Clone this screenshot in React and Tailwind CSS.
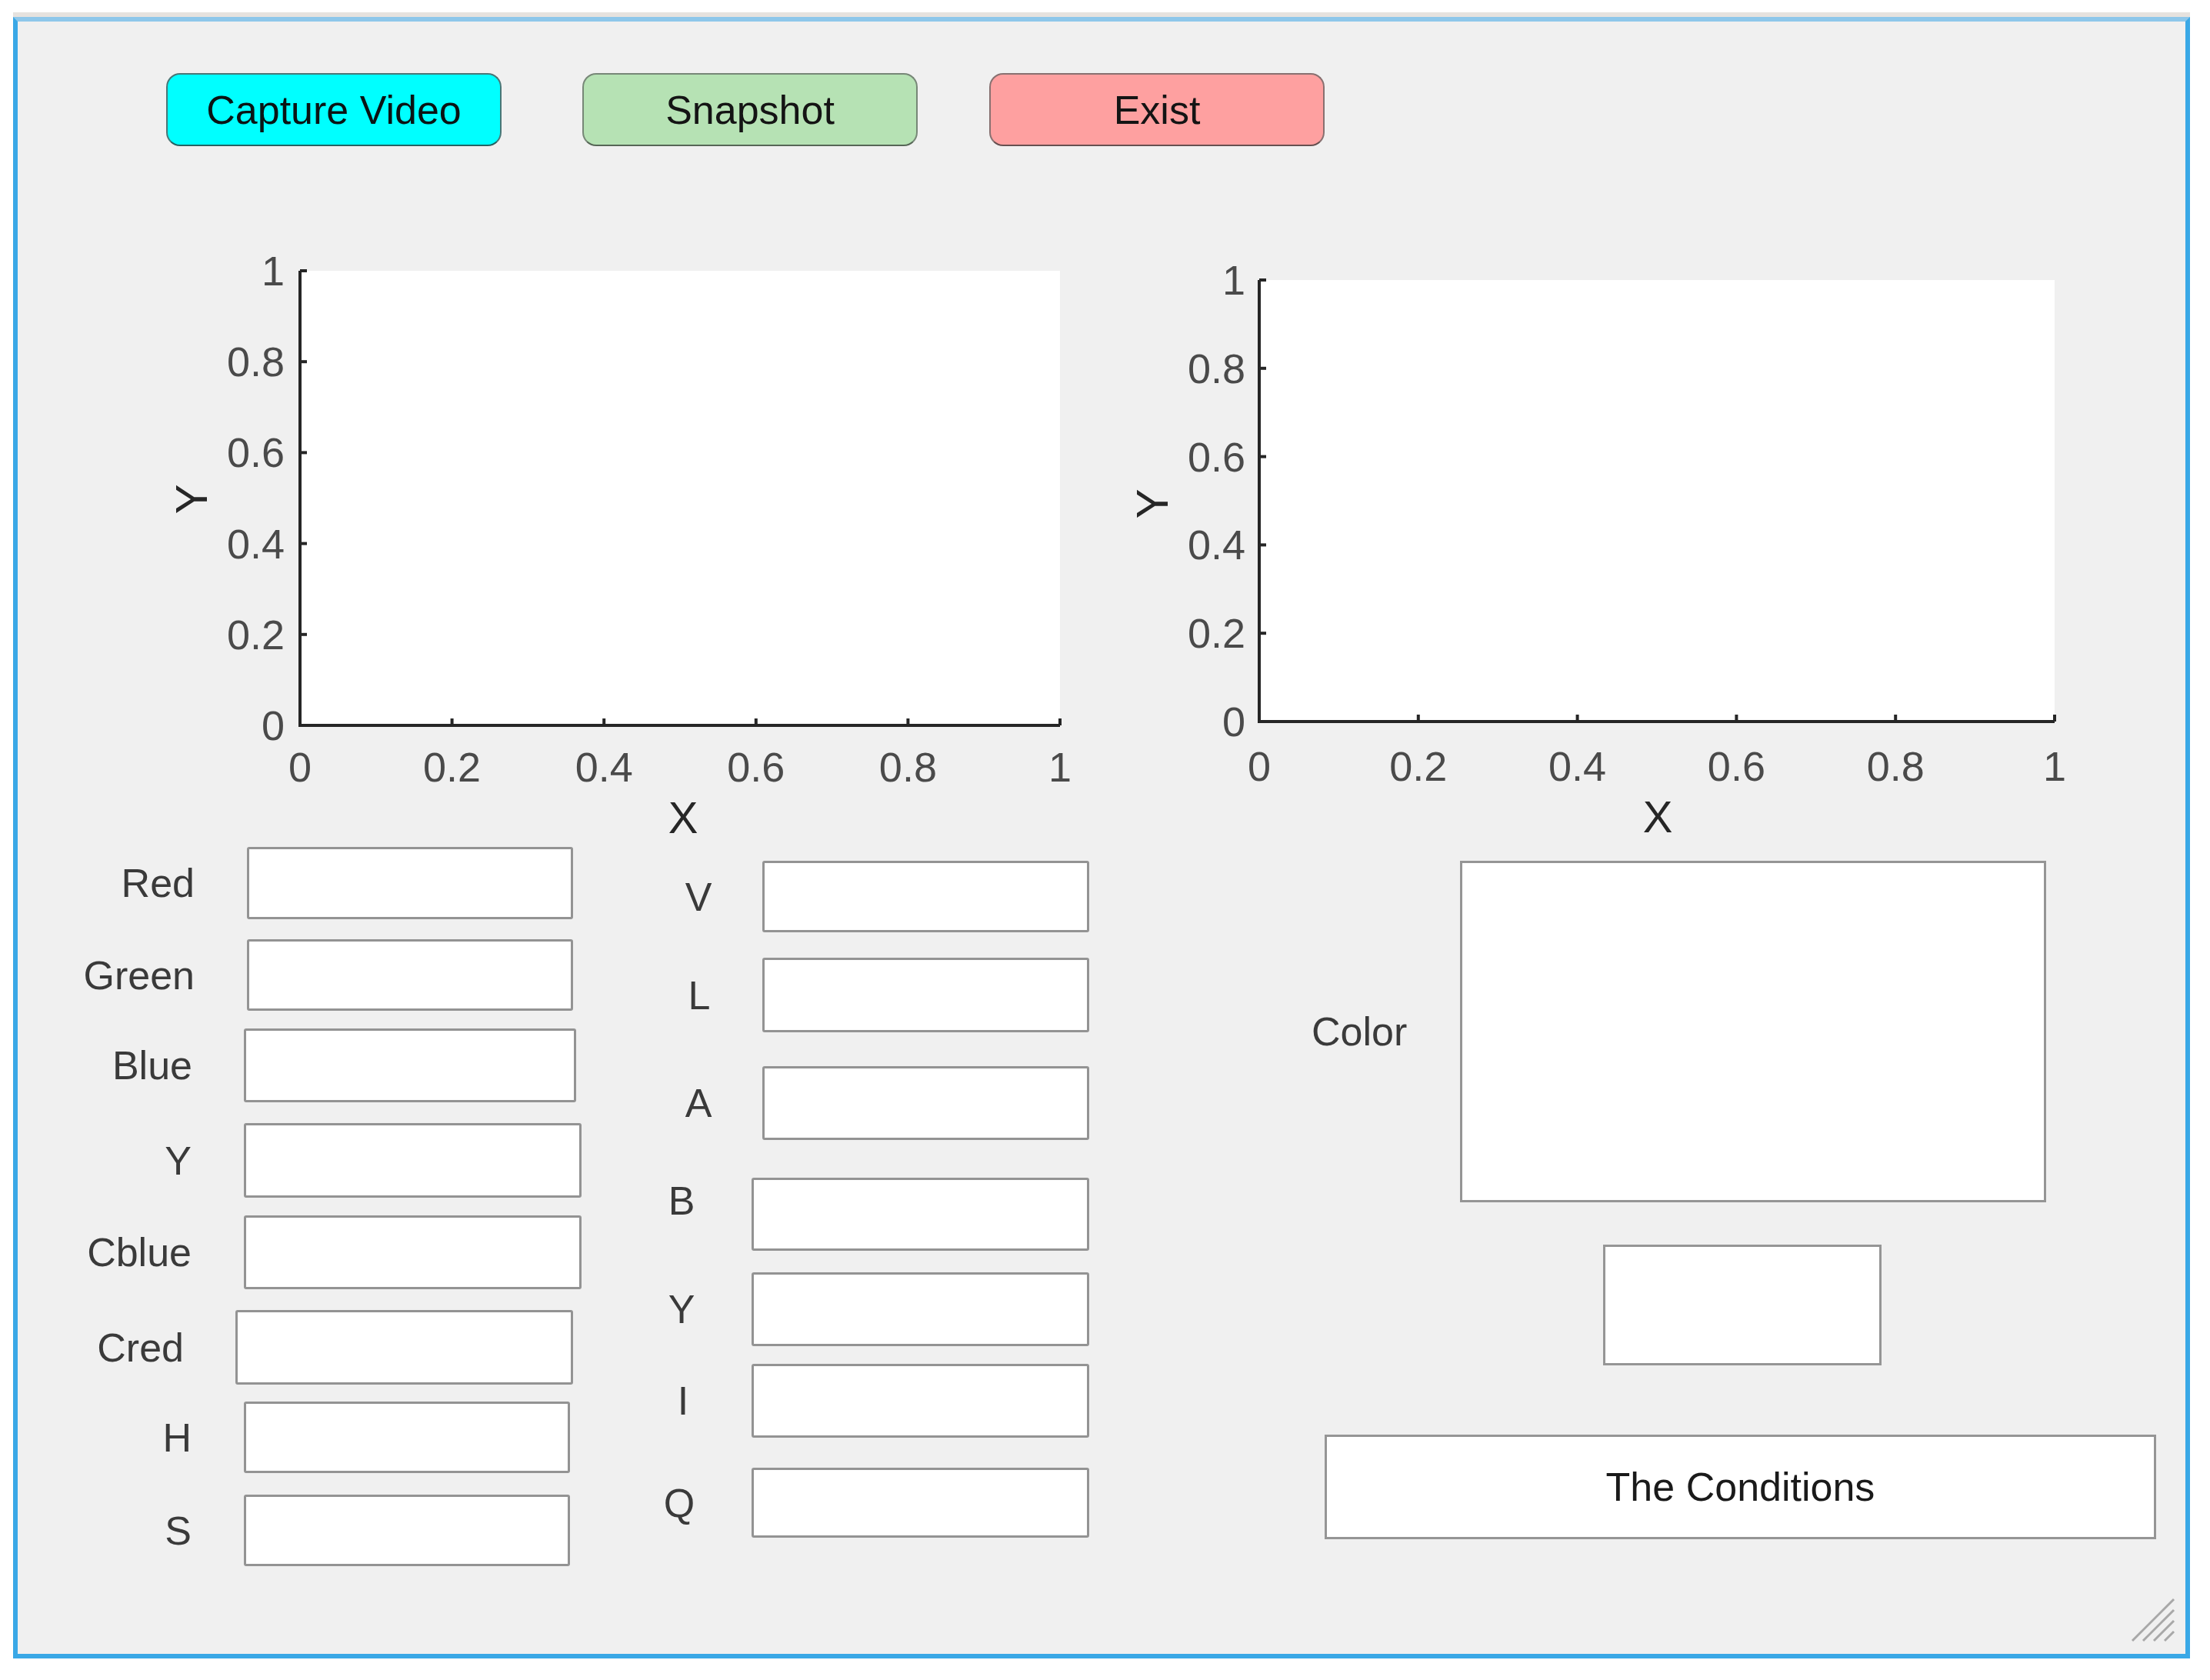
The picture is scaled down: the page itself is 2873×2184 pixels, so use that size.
import React from "react";

const yTicks = ["0", "0.2", "0.4", "0.6", "0.8", "1"];

function Axes({ ax, ay, aw, ah, ylx, yly, xlx, xly, ytx, xty }) {
  return (
    <g>
      <rect x={ax} y={ay} width={aw} height={ah} fill="#ffffff" />
      {yTicks.map((t, k) => {
        const y = ay + ah - (k * ah) / 5;
        return (
          <g key={"y" + k}>
            <line x1={ax} y1={y} x2={ax + 9} y2={y} stroke="#262626" strokeWidth="4" />
            <text x={ytx} y={y} textAnchor="end" dominantBaseline="central" fontSize="54" fill="#4a4a4a">
              {t}
            </text>
          </g>
        );
      })}
      {yTicks.map((t, k) => {
        const x = ax + (k * aw) / 5;
        return (
          <g key={"x" + k}>
            <line x1={x} y1={ay + ah} x2={x} y2={ay + ah - 9} stroke="#262626" strokeWidth="4" />
            <text x={x} y={xty} textAnchor="middle" dominantBaseline="central" fontSize="54" fill="#4a4a4a">
              {t}
            </text>
          </g>
        );
      })}
      <line x1={ax} y1={ay} x2={ax} y2={ay + ah + 2} stroke="#262626" strokeWidth="4" />
      <line x1={ax - 2} y1={ay + ah} x2={ax + aw} y2={ay + ah} stroke="#262626" strokeWidth="4" />
      <text x={ylx} y={yly} textAnchor="middle" dominantBaseline="central" fontSize="58" fill="#262626" transform={`rotate(-90 ${ylx} ${yly})`}>
        Y
      </text>
      <text x={xlx} y={xly} textAnchor="middle" dominantBaseline="central" fontSize="58" fill="#262626">
        X
      </text>
    </g>
  );
}

const leftRows = [
  { l: "Red", lab: "w-[230px]", row: "mt-[1px] h-[94px]", box: "ml-[68px] w-[424px]" },
  { l: "Green", lab: "w-[230px]", row: "mt-[26px] h-[93px]", box: "ml-[68px] w-[424px]" },
  { l: "Blue", lab: "w-[227px]", row: "mt-[23px] h-[96px]", box: "ml-[67px] w-[432px]" },
  { l: "Y", lab: "w-[226px]", row: "mt-[27px] h-[97px]", box: "ml-[68px] w-[439px]" },
  { l: "Cblue", lab: "w-[226px]", row: "mt-[23px] h-[96px]", box: "ml-[68px] w-[439px]" },
  { l: "Cred", lab: "w-[216px]", row: "mt-[27px] h-[97px]", box: "ml-[67px] w-[439px]" },
  { l: "H", lab: "w-[226px]", row: "mt-[22px] h-[93px]", box: "ml-[68px] w-[424px]" },
  { l: "S", lab: "w-[226px]", row: "mt-[28px] h-[93px]", box: "ml-[68px] w-[424px]" },
];

const midRows = [
  { l: "V", lab: "ml-[122px]", row: "mt-[19px] h-[93px]", box: "ml-[53px] w-[425px]" },
  { l: "L", lab: "ml-[123px]", row: "mt-[33px] h-[97px]", box: "ml-[52px] w-[425px]" },
  { l: "A", lab: "ml-[122px]", row: "mt-[44px] h-[96px]", box: "ml-[53px] w-[425px]" },
  { l: "B", lab: "ml-[100px] -translate-y-[18px]", row: "mt-[49px] h-[95px]", box: "ml-[61px] w-[439px]" },
  { l: "Y", lab: "ml-[100px]", row: "mt-[28px] h-[96px]", box: "ml-[61px] w-[439px]" },
  { l: "I", lab: "ml-[102px]", row: "mt-[23px] h-[96px]", box: "ml-[59px] w-[439px]" },
  { l: "Q", lab: "ml-[97px]", row: "mt-[39px] h-[91px]", box: "ml-[64px] w-[439px]" },
];

const boxCls = "h-full bg-white border-[3px] border-[#939393] rounded-[3px]";

export default function App() {
  return (
    <div className="w-[2873px] h-[2184px] bg-white pt-[22px] pl-[17px] font-['Liberation_Sans',Arial,sans-serif]">
      <div className="relative w-[2830px] h-[2134px] bg-[#f0f0f0] border-[6px] border-[#3aa8e6] border-t-[#8ec7ea] shadow-[0_-6px_0_0_#e6e2de] flex flex-col">
        {/* buttons */}
        <div className="flex mt-[67px] h-[95px]">
          <button className="ml-[193px] w-[436px] h-full rounded-[18px] bg-[#00ffff] border-[2px] border-[#4a7676] border-b-[#246262] text-[52px] text-[#0a1414] leading-none">
            Capture Video
          </button>
          <button className="ml-[105px] w-[436px] h-full rounded-[18px] bg-[#b6e2b4] border-[2px] border-[#778777] border-b-[#566656] text-[52px] text-[#141414] leading-none">
            Snapshot
          </button>
          <button className="ml-[93px] w-[436px] h-full rounded-[18px] bg-[#fea0a0] border-[2px] border-[#887070] border-b-[#665050] text-[52px] text-[#141414] leading-none">
            Exist
          </button>
        </div>

        {/* plots */}
        <div className="flex mt-[130px] h-[780px]">
          <svg className="ml-[177px] shrink-0" width="1220" height="780" viewBox="0 0 1220 780" fontFamily="'Liberation Sans', Arial, sans-serif">
            <Axes ax={190} ay={32} aw={988} ah={591} ylx={48} yly={329} xlx={688} xly={742} ytx={170} xty={677} />
          </svg>
          <svg className="ml-[40px] shrink-0" width="1260" height="780" viewBox="0 0 1260 780" fontFamily="'Liberation Sans', Arial, sans-serif">
            <Axes ax={177} ay={44} aw={1034} ah={574} ylx={37} yly={335} xlx={695} xly={741} ytx={159} xty={676} />
          </svg>
        </div>

        {/* fields */}
        <div className="flex text-[52px] text-[#3a3a3a] leading-none">
          <div className="w-[733px] shrink-0 flex flex-col">
            {leftRows.map((r) => (
              <div key={r.l} className={"flex items-center " + r.row}>
                <span className={"text-right shrink-0 " + r.lab}>{r.l}</span>
                <div className={boxCls + " shrink-0 " + r.box} />
              </div>
            ))}
          </div>
          <div className="w-[660px] shrink-0 flex flex-col">
            {midRows.map((r) => (
              <div key={r.l} className={"flex items-center " + r.row}>
                <span className={"w-[60px] text-center shrink-0 " + r.lab}>{r.l}</span>
                <div className={boxCls + " shrink-0 " + r.box} />
              </div>
            ))}
          </div>
          <div className="flex-1 flex flex-col">
            <div className="flex items-center mt-[19px] h-[444px]">
              <span className="ml-[289px] w-[124px] shrink-0">Color</span>
              <div className="ml-[69px] w-[762px] h-full bg-white border-[3px] border-[#959595] shrink-0" />
            </div>
            <div className="ml-[668px] mt-[55px] w-[362px] h-[157px] bg-white border-[3px] border-[#959595]" />
            <div className="ml-[306px] mt-[90px] w-[1081px] h-[136px] bg-white border-[3px] border-[#959595] flex items-center justify-center text-[#1a1a1a]">
              The Conditions
            </div>
          </div>
        </div>

        {/* resize grip */}
        <svg className="absolute right-[13px] bottom-[15px]" width="60" height="60" viewBox="0 0 60 60">
          <line x1="4" y1="58" x2="58" y2="4" stroke="#a8a8a8" strokeWidth="3" />
          <line x1="18" y1="58" x2="58" y2="18" stroke="#a8a8a8" strokeWidth="3" />
          <line x1="32" y1="58" x2="58" y2="32" stroke="#a8a8a8" strokeWidth="3" />
          <line x1="46" y1="58" x2="58" y2="46" stroke="#a8a8a8" strokeWidth="3" />
        </svg>
      </div>
    </div>
  );
}
